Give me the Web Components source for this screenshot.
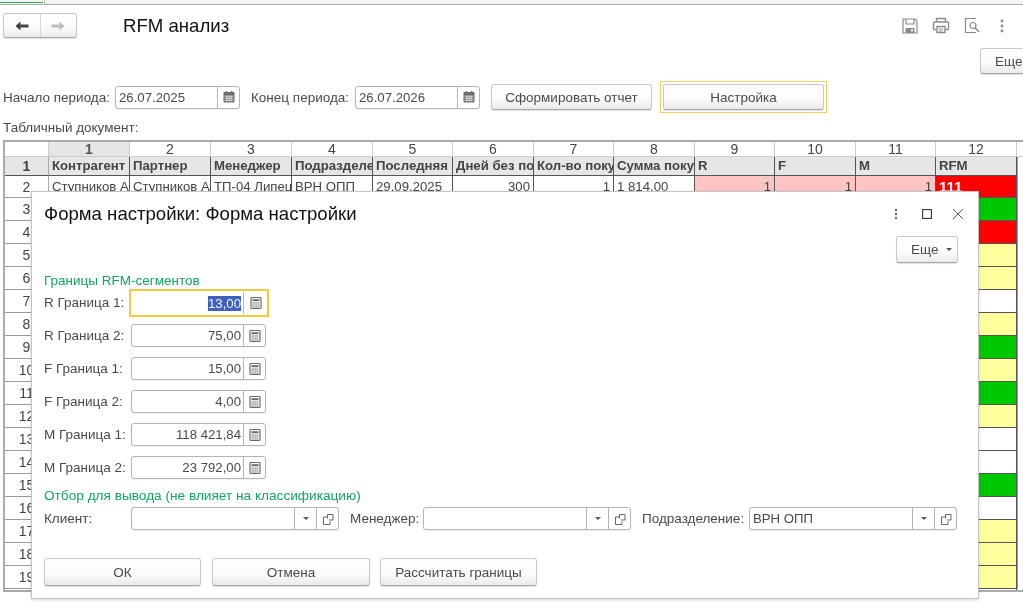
<!doctype html>
<html lang="ru">
<head>
<meta charset="utf-8">
<title>RFM анализ</title>
<style>
  html,body{ margin:0; padding:0; background:#fff; overflow:hidden; }
  body{ width:1023px; height:602px; font-family:"Liberation Sans", Arial, sans-serif; color:#4a4a4a; }
</style>
</head>
<body>
<rfm-app></rfm-app>

<script>
(() => {
  const ICONS = {
    calendar: `<svg width="14" height="14" viewBox="0 0 14 14"><rect x="1.500" y="2" width="11" height="10.500" rx="1.200" fill="#6b6b6b"/><rect x="3.500" y="1" width="1.400" height="2.400" fill="#6b6b6b"/><rect x="9" y="1" width="1.400" height="2.400" fill="#6b6b6b"/><path d="M2.500 6.200h9M2.500 8.300h9M2.500 10.400h9M4.800 5.500v6M7 5.500v6M9.200 5.500v6" stroke="#eee" stroke-width=".8"/></svg>`,
    calc: `<svg width="14" height="14" viewBox="0 0 14 14"><rect x="2" y="1.500" width="10" height="11" rx=".8" fill="none" stroke="#6b6b6b" stroke-width="1.200"/><rect x="3.500" y="3.200" width="7" height="2" fill="#6b6b6b"/><path d="M3.500 7h7M3.500 9h7M3.500 11h7" stroke="#6b6b6b" stroke-width="1.100" stroke-dasharray="1.400 .4"/></svg>`,
    open: `<svg width="14" height="14" viewBox="0 0 14 14" fill="none" stroke="#666" stroke-width="1"><path d="M6.500 6.500v-4h5.500v5.500h-4"/><path d="M6 5H2.500v7.500h6.500V9.500"/></svg>`,
    back: `<svg width="14" height="10" viewBox="0 0 14 10"><path d="M.5 5L5.500.5v3h8v3h-8v3z" fill="#444"/></svg>`,
    fwd: `<svg width="14" height="10" viewBox="0 0 14 10"><path d="M13.500 5L8.500.5v3h-8v3h8v3z" fill="#bcbcbc"/></svg>`,
    save: `<svg width="16" height="16" viewBox="0 0 16 16" fill="none" stroke="#8a8a8a" stroke-width="1.200"><path d="M1 1h12l2 2v12H1z"/><path d="M4 1v5h8V1"/><rect x="3.500" y="10" width="9" height="5" fill="#8a8a8a" stroke="none"/><rect x="9" y="11.500" width="2" height="2" fill="#fff" stroke="none"/></svg>`,
    print: `<svg width="18" height="17" viewBox="0 0 18 17" fill="none" stroke="#8a8a8a" stroke-width="1.400"><path d="M4.500 5V1.500h9V5"/><path d="M4 12.500H2.500a1 1 0 0 1-1-1V6a1 1 0 0 1 1-1h13a1 1 0 0 1 1 1v5.500a1 1 0 0 1-1 1H14"/><path d="M5 9.500h8v6H5z"/><path d="M7 12h4M7 14h3" stroke-width="1"/></svg>`,
    preview: `<svg width="16" height="17" viewBox="0 0 16 17" fill="none" stroke="#8a8a8a" stroke-width="1.200"><path d="M12 1.500H1.500v14H12"/><circle cx="9" cy="8.500" r="3"/><path d="M11.200 10.700L15 15" stroke-width="1.500"/></svg>`,
    kebab: `<svg width="4" height="14" viewBox="0 0 4 14"><circle cx="2" cy="2" r="1.400" fill="#8a8a8a"/><circle cx="2" cy="7" r="1.400" fill="#8a8a8a"/><circle cx="2" cy="12" r="1.400" fill="#8a8a8a"/></svg>`,
    kebabDark: `<svg width="4" height="12" viewBox="0 0 4 12"><circle cx="2" cy="2" r="1.200" fill="#666"/><circle cx="2" cy="6" r="1.200" fill="#666"/><circle cx="2" cy="10" r="1.200" fill="#666"/></svg>`,
    square: `<svg width="10" height="10" viewBox="0 0 10 10"><rect x=".6" y=".6" width="8.800" height="8.800" fill="none" stroke="#333" stroke-width="1.100"/></svg>`,
    close: `<svg width="12" height="12" viewBox="0 0 12 12"><path d="M1 1l10 10M11 1L1 11" stroke="#555" stroke-width="1" fill="none"/></svg>`
  };

  // кнопка 1С: серый градиент, опциональный фокус
  class RfmButton extends HTMLElement {
    constructor(){
      super();
      this.attachShadow({mode:'open'}).innerHTML = `
        <style>
          :host{ display:inline-flex; box-sizing:border-box; font-size:13.500px; color:#4a4a4a; }
          .b{
            flex:1; display:flex; align-items:center; justify-content:center; gap:8px;
            box-sizing:border-box; height:100%;
            border:1px solid #c8c8c8; border-bottom-color:#a8a8a8; border-radius:3px;
            background:linear-gradient(#fff 0%, #fbfbfb 60%, #eaeaea 100%);
            box-shadow:0 1px 1px rgba(0,0,0,.12);
            white-space:nowrap;
          }
          :host([focused]) { border:1px solid #f5d060; padding:2px; }
          :host([caret]) .b{ justify-content:flex-start; padding-left:14px; }
          .caret{ width:0; height:0; border:3px solid transparent; border-top:3px solid #555; border-bottom:0; }
        </style>
        <div class="b"><slot></slot>${this.hasAttribute('caret') ? '<span class="caret"></span>' : ''}</div>`;
    }
  }

  // поле ввода с кнопками справа
  class RfmField extends HTMLElement {
    constructor(){
      super();
      const btns = (this.getAttribute('buttons') || '').split(',').filter(Boolean);
      const parts = btns.map(n => n === 'drop'
        ? `<span class="btn"><i class="caret"></i></span>`
        : `<span class="btn">${ICONS[n]}</span>`).join('');
      const v = this.getAttribute('value') || '';
      const sel = this.hasAttribute('focused');
      this.attachShadow({mode:'open'}).innerHTML = `
        <style>
          :host{ display:inline-flex; box-sizing:border-box; height:23px; font-size:13.200px; color:#4a4a4a; }
          .f{
            flex:1; display:flex; box-sizing:border-box; min-width:0;
            border:1px solid #b4b4b4; border-radius:3px; background:#fff;
            box-shadow:0 1px 1px rgba(0,0,0,.06);
          }
          :host([focused]){ height:28px; margin:1px -3px 0 -2px; }
          :host([focused]) .f{ border:2px solid #f5c93e; border-radius:0; box-shadow:none; padding:1px 0; }
          :host([focused]) .btn{ width:23px; }
          :host([focused]) .v{ line-height:22px; }
          .v{ flex:1; min-width:0; padding:0 2px 0 3px; line-height:21px; white-space:nowrap; overflow:hidden; }
          .v b{ font-weight:normal; background:#3f60bd; color:#f2f2f2; display:inline-block; line-height:15px; vertical-align:middle; }
          :host([align=right]) .v{ text-align:right; }
          .btn{ width:21px; flex:none; display:flex; align-items:center; justify-content:center; border-left:1px solid #b4b4b4; }
          .btn svg{ display:block; }
          .caret{ width:0; height:0; border:3px solid transparent; border-top:3px solid #555; border-bottom:0; }
        </style>
        <div class="f"><span class="v">${sel ? `<b>${v}</b>` : v}</span>${parts}</div>`;
    }
  }

  // табличный документ (фон за диалогом)
  class RfmSheet extends HTMLElement {
    constructor(){
      super();
      const widths = [81,81,81,81,80,81,80,81,80,81,80,81];
      const head = ['Контрагент','Партнер','Менеджер','Подразделе','Последняя','Дней без по','Кол-во поку','Сумма поку','R','F','M','RFM'];
      const row2 = ['Ступников А','Ступников А','ТП-04 Липец','ВРН ОПП','29.09.2025','300','1','1 814,00','1','1','1','111'];
      const right = new Set([5,6,8,9,10]);
      const seg = ['g','r','y','y','w','y','g','y','g','y','w','w','g','w','y','y','y'];
      let h = `<div class="c corner"></div>`;
      widths.forEach((_,i) => { h += `<div class="c top${i===0?' cur':''}">${i+1}</div>`; });
      h += `<div class="c top end"></div>`;
      h += `<div class="c rn hd">1</div>`;
      head.forEach(t => { h += `<div class="c th">${t}</div>`; });
      h += `<div class="c fill"></div>`;
      h += `<div class="c rn">2</div>`;
      row2.forEach((t,i) => {
        const cls = (i>=8 && i<=10 ? ' pink':'') + (i===11 ? ' red':'') + (right.has(i) ? ' right':'');
        h += `<div class="c td${cls}">${t}</div>`;
      });
      h += `<div class="c fill"></div>`;
      seg.forEach((s,n) => {
        h += `<div class="c rn">${n+3}</div>`;
        for (let i=0;i<11;i++) h += `<div class="c td"></div>`;
        h += `<div class="c td seg-${s}"></div><div class="c fill"></div>`;
      });
      // обрезанная строка 20 внизу
      h += `<div class="c rn"></div>`;
      for (let i=0;i<12;i++) h += `<div class="c td"></div>`;
      this.attachShadow({mode:'open'}).innerHTML = `
        <style>
          :host{ display:block; box-sizing:border-box; height:452px; margin-left:3px; overflow:hidden;
                 border:solid #aaa; border-width:2px 0 2px 2px; font-size:13.200px; color:#444; }
          .g{ display:grid; grid-template-columns:44px ${widths.map(w=>w+'px').join(' ')} 8px;
              grid-template-rows:15px 19px 22px repeat(17, 23px) 8px; }
          .c{ box-sizing:border-box; overflow:hidden; white-space:nowrap; line-height:20px; padding:0 2px; }
          .corner{ border-right:1px solid #ccc; border-bottom:1px solid #ccc; }
          .top{ text-align:center; font-size:14px; line-height:15px; border-right:1px solid #ccc; border-bottom:1px solid #ccc; }
          .top.cur{ background:#e6e6e6; font-weight:bold; color:#555; }
          .top.end{ border-right:0; }
          .rn{ text-align:center; font-size:14px; border-right:1px solid #aaa; border-bottom:1px solid #999; line-height:22px; }
          .rn.hd{ background:#e6e6e6; font-weight:bold; line-height:18px; border-bottom-color:#555; }
          .th{ background:#e6e6e6; font-weight:bold; line-height:18px; padding:0 3px;
               border-right:1px solid #555; border-bottom:1px solid #555; }
          .td{ border-right:1px solid #555; border-bottom:1px solid #555; padding:0 3px; line-height:22px; }
          .right{ text-align:right; }
          .pink{ background:#ffc4c4; }
          .red{ background:#ff0000; color:#fff; font-weight:bold; font-size:15px; }
          .seg-g{ background:#00c800; }
          .seg-r{ background:#ff0000; }
          .seg-y{ background:#ffff9c; }
          .seg-w{ background:#fff; }
          .fill{ background:#fff; border-left:1px solid #999; }
        </style>
        <div class="g">${h}</div>`;
    }
  }

  // диалог настройки
  class RfmDialog extends HTMLElement {
    constructor(){
      super();
      const num = (label, value, focused) => `
        <div class="row">
          <span class="lbl">${label}</span>
          <rfm-field class="num${focused ? ' on':''}" align="right" value="${value}" buttons="calc"${focused ? ' focused':''}></rfm-field>
        </div>`;
      this.attachShadow({mode:'open'}).innerHTML = `
        <style>
          :host{ position:absolute; left:32px; top:192px; width:946px; height:406px; box-sizing:border-box;
                 background:#fff; box-shadow:0 0 0 1px #c4c4c4, 0 1px 4px rgba(0,0,0,.25);
                 display:flex; flex-direction:column; padding:0 20px 0 12px; font-size:13.500px; color:#4a4a4a; }
          .title{ display:flex; align-items:center; height:44px; }
          .title h1{ flex:1; margin:0; font-size:18.600px; font-weight:normal; color:#111; }
          .wctl{ display:flex; align-items:center; margin-right:-15px; }
          .wctl span{ width:31px; display:flex; justify-content:center; align-items:center; }
          .more{ display:flex; justify-content:flex-end; height:27px; }
          .more rfm-button{ width:62px; height:27px; }
          .group{ color:#12a560; font-size:13.500px; line-height:16px; }
          .g1{ margin-top:10px; }
          .rows{ display:flex; flex-direction:column; gap:10px; margin-top:2px; }
          .row{ display:flex; align-items:center; height:23px; }
          .lbl{ width:87px; flex:none; white-space:nowrap; }
          .num{ width:135px; }
          .num.on{ width:140px; }
          .g2{ margin-top:9px; font-size:13.650px; }
          .sel{ display:flex; align-items:center; height:23px; margin-top:3px; }
          .sel rfm-field{ width:208px; flex:none; }
          .sel .l2{ margin-left:11px; width:73px; flex:none; }
          .sel .l3{ margin-left:11px; width:107px; flex:none; white-space:nowrap; }
          .foot{ display:flex; margin-top:28px; }
          .foot rfm-button{ width:157px; height:28px; }
          .foot .mid{ width:158px; margin:0 10px 0 11px; }
        </style>
        <div class="title">
          <h1>Форма настройки: Форма настройки</h1>
          <div class="wctl"><span>${ICONS.kebabDark}</span><span>${ICONS.square}</span><span>${ICONS.close}</span></div>
        </div>
        <div class="more"><rfm-button caret>Еще</rfm-button></div>
        <div class="group g1">Границы RFM-сегментов</div>
        <div class="rows">
          ${num('R Граница 1:','13,00',true)}
          ${num('R Граница 2:','75,00')}
          ${num('F Граница 1:','15,00')}
          ${num('F Граница 2:','4,00')}
          ${num('М Граница 1:','118 421,84')}
          ${num('М Граница 2:','23 792,00')}
        </div>
        <div class="group g2">Отбор для вывода (не влияет на классификацию)</div>
        <div class="sel">
          <span class="lbl">Клиент:</span>
          <rfm-field buttons="drop,open"></rfm-field>
          <span class="l2">Менеджер:</span>
          <rfm-field buttons="drop,open"></rfm-field>
          <span class="l3">Подразделение:</span>
          <rfm-field value="ВРН ОПП" buttons="drop,open"></rfm-field>
        </div>
        <div class="foot">
          <rfm-button>ОК</rfm-button>
          <rfm-button class="mid">Отмена</rfm-button>
          <rfm-button>Рассчитать границы</rfm-button>
        </div>`;
    }
  }

  class RfmApp extends HTMLElement {
    constructor(){
      super();
      this.attachShadow({mode:'open'}).innerHTML = `
        <style>
          :host{ display:block; position:relative; width:1023px; height:602px; overflow:hidden; font-size:13.500px; color:#4a4a4a; filter:blur(.35px); }
          .tabs{ height:5px; box-sizing:border-box; border-bottom:1px solid #aaa; background:#f4f4f4; display:flex; }
          .tabs i{ display:block; width:45px; height:4px; box-sizing:border-box; border-right:1px solid #bbb; position:relative; }
          .tabs i::after{ content:""; display:block; width:43px; height:1px; margin-top:2px; background:#2fa84f; }
          .bar{ display:flex; align-items:center; height:25px; margin-top:8px; padding-left:3px; }
          .nav{ display:flex; width:74px; height:25px; box-sizing:border-box; border:1px solid #c8c8c8; border-bottom-color:#a8a8a8; border-radius:3px;
                background:linear-gradient(#fff 0%, #fbfbfb 60%, #eaeaea 100%); box-shadow:0 1px 1px rgba(0,0,0,.12); }
          .nav span{ flex:1; display:flex; align-items:center; justify-content:center; }
          .nav span + span{ border-left:1px solid #d6d6d6; }
          h1{ margin:0 0 0 46px; flex:1; font-size:18.600px; font-weight:normal; color:#111; }
          .tools{ display:flex; align-items:center; gap:14px; margin-right:19px; }
          .tools svg{ display:block; }
          .tools svg:last-child{ margin-left:6px; }
          .more{ display:flex; justify-content:flex-end; margin-top:10px; height:26px; }
          .more rfm-button{ width:62px; height:26px; margin-right:-19px; }
          .params{ display:flex; align-items:center; height:32px; margin-top:7px; padding-left:3px; }
          .params rfm-field{ width:125px; flex:none; }
          .params .a{ width:112px; flex:none; white-space:nowrap; }
          .params .e{ margin-left:11px; width:104px; flex:none; white-space:nowrap; }
          .params .go{ width:161px; height:26px; margin-left:11px; }
          .params .cfg{ width:167px; height:32px; margin-left:8px; }
          .cap{ line-height:16px; margin-top:7px; padding-left:3px; }
          rfm-sheet{ margin-top:4px; }
        </style>
        <div class="tabs"><i></i></div>
        <div class="bar">
          <div class="nav"><span>${ICONS.back}</span><span>${ICONS.fwd}</span></div>
          <h1>RFM анализ</h1>
          <div class="tools">${ICONS.save}${ICONS.print}${ICONS.preview}${ICONS.kebab}</div>
        </div>
        <div class="more"><rfm-button caret>Еще</rfm-button></div>
        <div class="params">
          <span class="a">Начало периода:</span>
          <rfm-field value="26.07.2025" buttons="calendar"></rfm-field>
          <span class="e">Конец периода:</span>
          <rfm-field value="26.07.2026" buttons="calendar"></rfm-field>
          <rfm-button class="go">Сформировать отчет</rfm-button>
          <rfm-button class="cfg" focused>Настройка</rfm-button>
        </div>
        <div class="cap">Табличный документ:</div>
        <rfm-sheet></rfm-sheet>
        <rfm-dialog></rfm-dialog>`;
    }
  }

  customElements.define('rfm-button', RfmButton);
  customElements.define('rfm-field', RfmField);
  customElements.define('rfm-sheet', RfmSheet);
  customElements.define('rfm-dialog', RfmDialog);
  customElements.define('rfm-app', RfmApp);
})();
</script>
</body>
</html>
